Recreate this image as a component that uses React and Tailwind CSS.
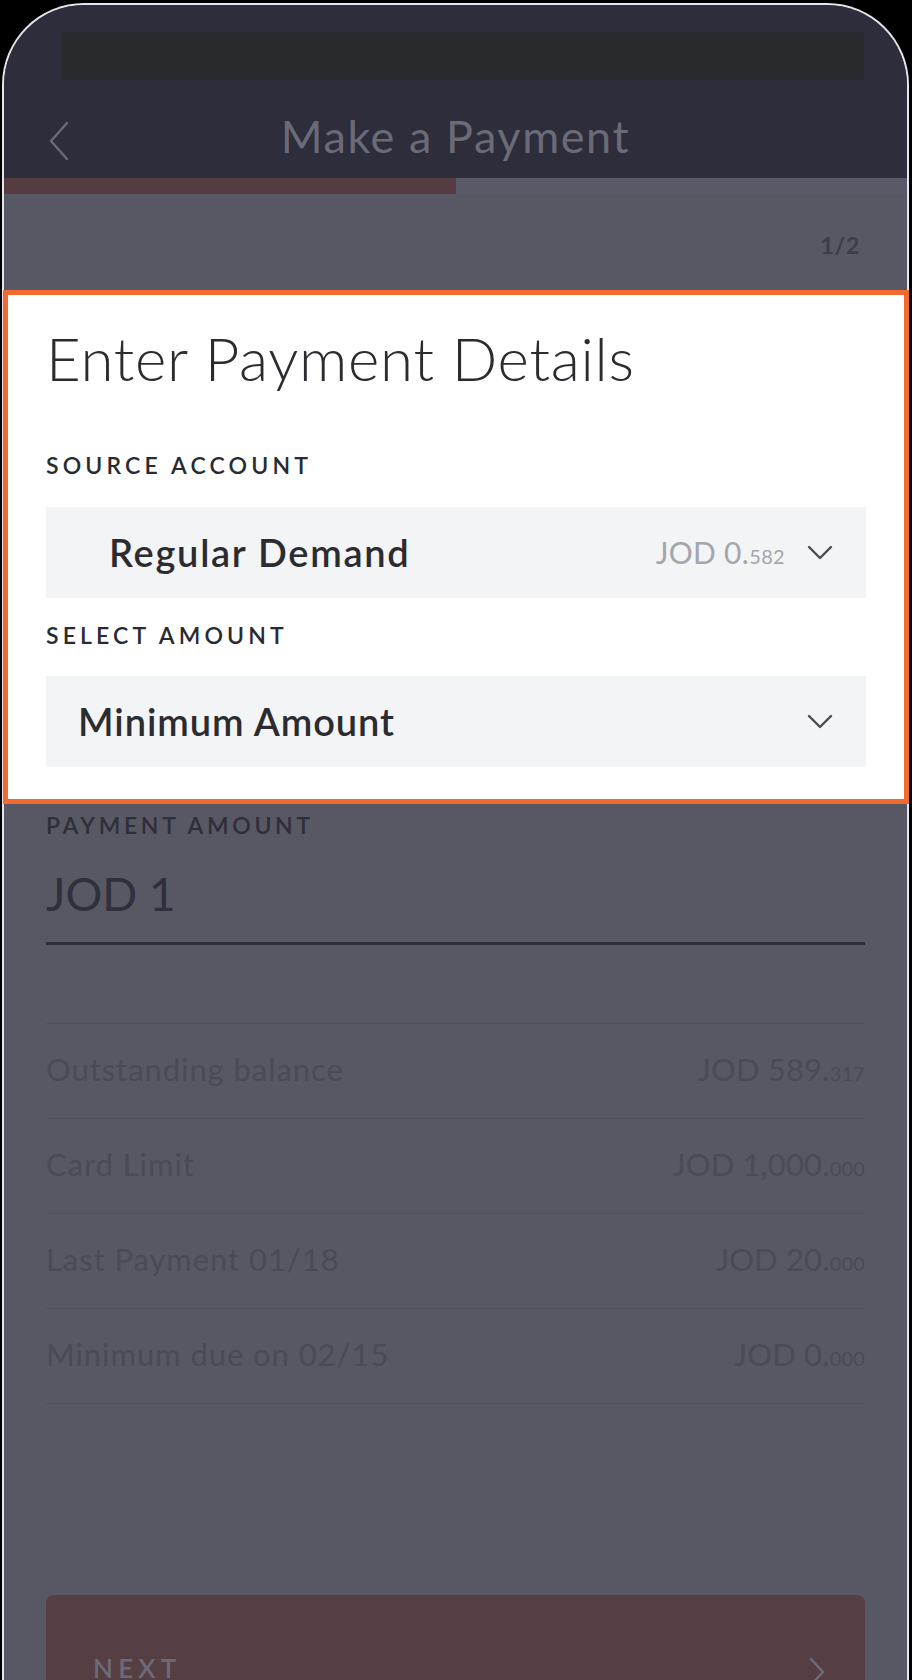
import React from "react";

const rows = [
  { label: "Outstanding balance", whole: "JOD 589.", dec: "317" },
  { label: "Card Limit", whole: "JOD 1,000.", dec: "000" },
  { label: "Last Payment 01/18", whole: "JOD 20.", dec: "000" },
  { label: "Minimum due on 02/15", whole: "JOD 0.", dec: "000" },
];

function ChevronDown() {
  return (
    <svg width="26" height="15" viewBox="0 0 26 15" fill="none">
      <path d="M2 2 L13 13 L24 2" stroke="#4b4b53" strokeWidth="2.4" strokeLinecap="round" strokeLinejoin="round" />
    </svg>
  );
}

export default function App() {
  return (
    <div className="w-[912px] h-[1680px] overflow-hidden bg-black pt-[3px] pl-[2px] font-[Lato,'Liberation_Sans',sans-serif]">
      <div className="w-[907px] h-[1700px] rounded-t-[82px] border-2 border-b-0 border-[#e6e6ea] bg-[#585764]">
        {/* header */}
        <div className="h-[173px] rounded-t-[80px] bg-[#2e2d3b] pt-[27px]">
          <div className="ml-[57px] w-[803px] h-[48px] bg-[#282a2e]" />
          <div className="grid grid-cols-[1fr_auto_1fr] items-center h-[98px] pt-[15px]">
            <div className="pl-[44px] mt-[8px]">
              <svg width="22" height="40" viewBox="0 0 22 40" fill="none">
                <path d="M19 2 L3 20 L19 38" stroke="#6b6a77" strokeWidth="2.4" strokeLinecap="round" strokeLinejoin="round" />
              </svg>
            </div>
            <h1 className="text-[45px] leading-[45px] tracking-[0.035em] text-[#6b6a77]">Make a Payment</h1>
            <div />
          </div>
        </div>

        {/* progress */}
        <div className="flex h-[16px] bg-[#5a5967]">
          <div className="w-[452px] bg-[#553c40]" />
        </div>

        <div className="h-[96px] pt-[40px] pr-[47px] text-right text-[23px] leading-[23px] font-bold tracking-[0.03em] text-[#3d3c49]">
          1/2
        </div>

        {/* highlighted form */}
        <div className="-ml-[1px] -mr-[2px] border-[5px] border-[#f26a30] bg-white px-[38px] pt-[33px] pb-[32px]">
          <h2 className="text-[60px] leading-[60px] font-light tracking-[0.012em] text-[#2b2b30]">
            Enter Payment Details
          </h2>
          <p className="mt-[66px] text-[23px] leading-[22px] font-semibold tracking-[0.18em] text-[#2a2a31]">
            SOURCE ACCOUNT
          </p>
          <div className="mt-[31px] h-[91px] bg-[#f3f4f6] flex items-center pl-[63px] pr-[33px]">
            <span className="text-[38px] font-semibold tracking-[0.045em] text-[#2b2b30]">Regular Demand</span>
            <span className="ml-auto mr-[22px] text-[#a5a5ad] tracking-[0.02em]">
              <span className="text-[30px]">JOD 0.</span>
              <span className="text-[20px]">582</span>
            </span>
            <ChevronDown />
          </div>
          <p className="mt-[26px] text-[23px] leading-[22px] font-semibold tracking-[0.18em] text-[#2a2a31]">
            SELECT AMOUNT
          </p>
          <div className="mt-[30px] h-[91px] bg-[#f3f4f6] flex items-center justify-between pl-[32px] pr-[33px]">
            <span className="text-[38px] font-semibold tracking-[0.025em] text-[#2b2b30]">Minimum Amount</span>
            <ChevronDown />
          </div>
        </div>

        {/* dimmed content */}
        <div className="px-[42px]">
          <p className="mt-[10px] text-[23px] leading-[22px] font-semibold tracking-[0.16em] text-[#2f2e3a]">
            PAYMENT AMOUNT
          </p>
          <div className="mt-[35px] pb-[25px] border-b-[3px] border-[#2f2e3a]">
            <span className="block text-[46px] leading-[46px] text-[#302f3c]">JOD 1</span>
          </div>

          <div className="mt-[78px] border-t border-[#51505c]">
            {rows.map((r) => (
              <div key={r.label} className="flex items-center justify-between h-[95px] pb-[3px] border-b border-[#51505c] text-[#4b4a57]">
                <span className="text-[31px] tracking-[0.03em]">{r.label}</span>
                <span className="tracking-[0.01em]">
                  <span className="text-[31px]">{r.whole}</span>
                  <span className="text-[20px]">{r.dec}</span>
                </span>
              </div>
            ))}
          </div>

          <div className="mt-[191px] h-[120px] rounded-[8px] bg-[#553f43] flex justify-between pl-[47px] pr-[40px] pt-[60px]">
            <span className="text-[26px] leading-[26px] font-semibold tracking-[0.2em] text-[#6c6b79]">NEXT</span>
            <svg width="16" height="30" viewBox="0 0 16 30" fill="none" className="mt-[2px]">
              <path d="M2 2 L14 15 L2 28" stroke="#6c6b79" strokeWidth="2.4" strokeLinecap="round" strokeLinejoin="round" />
            </svg>
          </div>
        </div>
      </div>
    </div>
  );
}
